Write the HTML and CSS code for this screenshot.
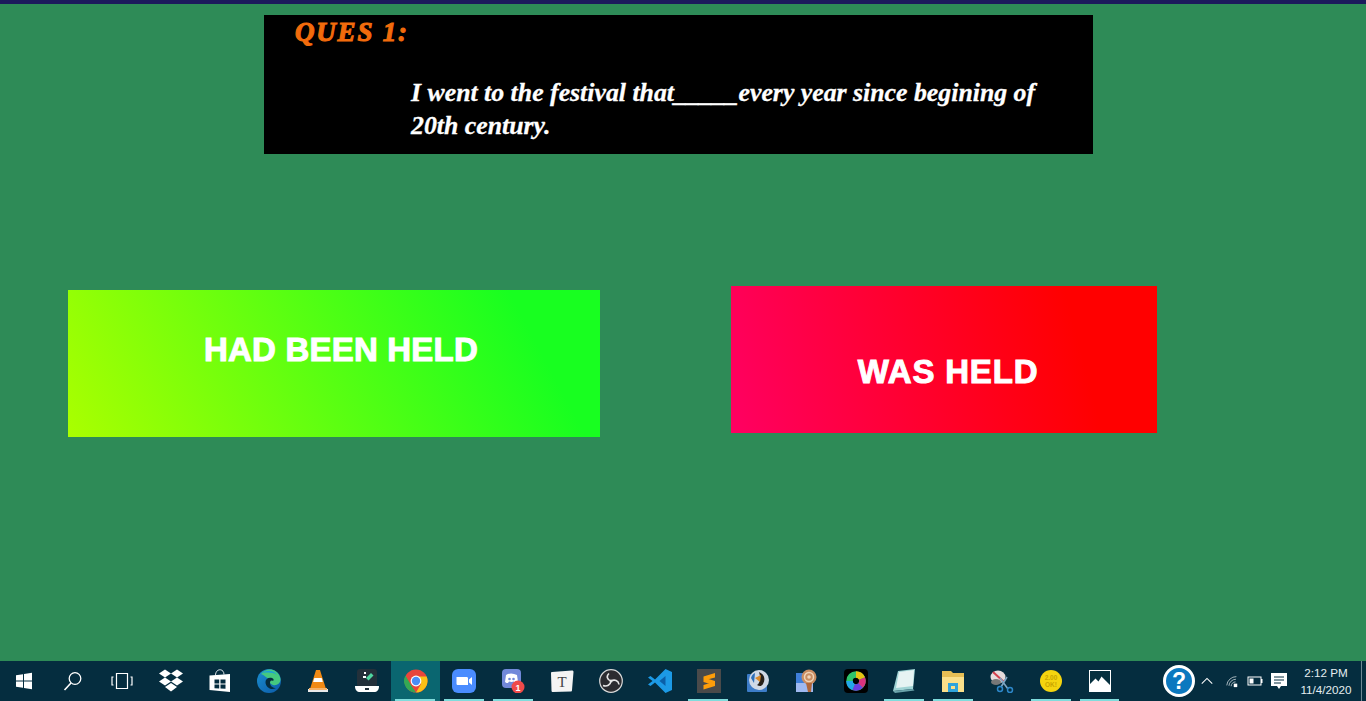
FILE: index.html
```html
<!DOCTYPE html>
<html lang="en">
<head>
<meta charset="utf-8">
<title>Quiz</title>
<link rel="stylesheet" href="styles.css">
</head>
<body>
<div class="topbar"></div>
<main class="quiz">
  <section class="question">
    <h1 class="ques-title">QUES 1:</h1>
    <p class="ques-text">I went to the festival that_____every year since begining of 20th century.</p>
  </section>
  <section class="options">
    <div class="option option-green"><span class="option-label label-green">HAD BEEN HELD</span></div>
    <div class="option option-red"><span class="option-label label-red">WAS HELD</span></div>
  </section>
</main>
<footer class="taskbar">
  <div class="apps">
    <div class="app"><svg class="ic" viewBox="0 0 24 24"><path fill="#fff" d="M4 6.200l7-1v6.300H4zM12 5l8-1.200v7.700h-8zM4 12.500h7v6.300l-7-1zM12 12.500h8v7.700l-8-1.200z"/></svg></div>
    <div class="app"><svg class="ic" viewBox="0 0 24 24"><circle cx="14" cy="9.500" r="5.800" fill="none" stroke="#fff" stroke-width="1.300"/><path d="M10 14l-6.500 7" stroke="#fff" stroke-width="1.600" fill="none"/></svg></div>
    <div class="app"><svg class="ic" viewBox="0 0 24 24"><path fill="none" stroke="#fff" stroke-width="1.200" d="M6.500 4.500h11v15h-11zM3.500 8H2v8h1.500M20.500 8H22v8h-1.500"/></svg></div>
    <div class="app"><svg class="ic" viewBox="0 0 24 24"><path fill="#fff" d="M6 .5L12 4.500 6 8.500 0 4.500zM18 .5L24 4.500l-6 4-6-4zM6 8.500L12 12.500 6 16.500 0 12.500zM18 8.500L24 12.500l-6 4-6-4zM12 14l6 4-6 4.500-6-4.500z"/></svg></div>
    <div class="app"><svg class="ic" viewBox="0 0 24 24"><path fill="none" stroke="#dfe8ec" stroke-width="1" d="M7.500 6.500C7.500 -1 16 -1 16 5.500"/><path fill="#fff" d="M1.500 6.500L22 5v18l-20.500-2z"/><path fill="#052d3f" d="M6.500 10.500h4.700v4H6.500zM12.500 10.500h5v4h-5zM6.500 15.500h4.700v4l-4.700-.3zM12.500 15.500h5v4.200l-5-.3z"/></svg></div>
    <div class="app"><svg class="ic" viewBox="0 0 24 24"><defs><linearGradient id="edge" x1="0" y1="0" x2="1" y2="1"><stop offset="0" stop-color="#1a8fd0"/><stop offset="1" stop-color="#0c5aa8"/></linearGradient></defs><circle cx="12" cy="12" r="12" fill="url(#edge)"/><path fill="#45c97f" d="M4 5c5-7 16-6 19 3 2 6-3 9-7 8-3-1-4-3-3-5-3-2-6-5-9-6z"/><path fill="#1aa0d8" d="M4 5c4-4 12-5 16 1-4-3-12-3-16-1z"/><path fill="#052d3f" d="M8.500 13c0-3 3-5 6.500-4 2 1 2 2 1 3-2-1-3 0-3 2 0 3 3 5 6 5-5 3-10.500-1-10.500-6z"/></svg></div>
    <div class="app"><svg class="ic" viewBox="0 0 24 24"><path fill="#f28a14" d="M10 1h4l6 19H4z"/><path fill="#fff" d="M8.300 9h7.400l1.100 4H7.100z"/><path fill="#e9e9e9" d="M2 20h20v3H2z"/><path fill="#f7b267" d="M3 19h18v2H3z"/></svg></div>
    <div class="app"><svg class="ic" viewBox="0 0 24 24"><rect x="2" y="0" width="20" height="18" rx="3" fill="#23303a"/><path fill="#4fd6a0" d="M11 9l5-5 2.500 2.500-5 5z"/><path fill="#fff" d="M9 3h2v2H9zM8 7h3v2H8z"/><path fill="#fff" d="M0 17h24c0 4-2 6-5 6H5c-3 0-5-2-5-6z"/><rect x="10" y="19" width="4" height="2" fill="#23303a"/></svg></div>
    <div class="app app-active run"><svg class="ic" viewBox="0 0 24 24"><circle cx="12" cy="12" r="11.500" fill="#e8453c"/><path fill="#34a853" d="M1.500 6.500L7 16l5 7.500A11.500 11.500 0 0 1 1.500 6.500z"/><path fill="#fbc116" d="M12 7.500h10.600A11.500 11.500 0 0 1 12 23.500L17 15z"/><circle cx="12" cy="12" r="5.400" fill="#fff"/><circle cx="12" cy="12" r="4.200" fill="#4a8df6"/></svg></div>
    <div class="app run"><svg class="ic" viewBox="0 0 24 24"><rect x="0" y="0" width="24" height="24" rx="6" fill="#4a8cff"/><path fill="#fff" d="M4.500 8h10c1 0 1.500.5 1.500 1.500V16H6c-1 0-1.500-.5-1.500-1.500zM17 10.500l3-2.500v8l-3-2.500z"/></svg></div>
    <div class="app run"><svg class="ic" viewBox="0 0 24 24"><rect x="1" y="0" width="19" height="19" rx="4" fill="#7289da"/><path fill="#fff" d="M5 6c3-2 7-2 11 0l1 7c-1 1-2 1-3 1l-1-1.500c-2 .5-3 .5-5 0L7 14c-1 0-2 0-3-1z"/><circle cx="8.500" cy="10" r="1.300" fill="#7289da"/><circle cx="12.500" cy="10" r="1.300" fill="#7289da"/><circle cx="17" cy="18" r="6.500" fill="#ef4a4a"/><text x="17" y="21.800" class="badge">1</text></svg></div>
    <div class="app"><svg class="ic" viewBox="0 0 24 24"><path fill="#f4f4f4" d="M2 3l20-1.500c1 0 1.500 .5 1.500 1.500L22 21c0 1-.5 1.500-1.500 1.500L3 23c-1 0-1.500-.5-1.500-1.500L1 4c0-.5.500-1 1-1z"/><text x="12" y="18" class="tile-t">T</text></svg></div>
    <div class="app"><svg class="ic" viewBox="0 0 24 24"><circle cx="12" cy="12" r="11.300" fill="#2c2c30" stroke="#d8d8d8" stroke-width="1.200"/><path fill="none" stroke="#e6e6e6" stroke-width="1.600" d="M12 12C8 11 7 7 10 4.500M12 12c3.500-2 7.500-.5 8 3.500M12 12c-.5 4-4 6-8 4.500"/><circle cx="12" cy="12" r="1.500" fill="#e6e6e6"/></svg></div>
    <div class="app"><svg class="ic" viewBox="0 0 24 24"><path fill="#1c9ae6" d="M17.500 0L24 3v18l-6.500 3L7 13.500 2.500 17 0 15.500 4.500 12 0 8.500 2.500 7 7 10.500z"/><path fill="#0a5fa8" d="M17.500 7l-6 5 6 5z"/></svg></div>
    <div class="app run"><svg class="ic" viewBox="0 0 24 24"><rect width="24" height="24" fill="#4a4a4a"/><path fill="#ff9d0a" d="M18 4v4.500L6.500 11.500V7.500zM6.500 8.500L18 12v4.500L6.500 13zM18 12.500V17L6.500 20.500V16z"/></svg></div>
    <div class="app"><svg class="ic" viewBox="0 0 24 24"><rect x="1" y="5" width="20" height="18" rx="1" fill="#3c7cc8"/><circle cx="13" cy="11" r="10" fill="#cfd9e6"/><path fill="#26201a" d="M13 3c5 2 7 7 4 12-2 3-4 2-6 1 3-2 4-7 2-13z"/><path fill="#d98a2c" d="M9 9l6-3-1 7z"/><path fill="#2d6fb8" d="M5 9c1-3 2-4 4-5l-1 10z"/></svg></div>
    <div class="app"><svg class="ic" viewBox="0 0 24 24"><rect x="1" y="4" width="17" height="19" fill="#3f7fd9"/><rect x="1" y="14" width="17" height="9" fill="#9fb9f0"/><circle cx="14" cy="8" r="7.500" fill="#c98d62"/><circle cx="14" cy="8" r="4.500" fill="none" stroke="#f0d5b8" stroke-width="1.500"/><circle cx="14" cy="8" r="1.800" fill="#f0d5b8"/><path fill="#b0673a" d="M11 14h6l-1 9h-3z"/></svg></div>
    <div class="app"><svg class="ic" viewBox="0 0 24 24"><rect width="24" height="24" rx="4" fill="#000"/><g fill="none" stroke-width="6.500"><circle cx="12" cy="12" r="6.500" stroke="#2ec46a"/><path stroke="#e6c312" d="M12 5.500a6.500 6.500 0 0 1 6 4"/><path stroke="#d8327d" d="M18 9.500a6.500 6.500 0 0 1-1.500 7"/><path stroke="#6a3ee0" d="M16.500 16.500a6.500 6.500 0 0 1-7 1.500"/><path stroke="#22a6e8" d="M9.500 18a6.500 6.500 0 0 1-4-6"/></g></svg></div>
    <div class="app run"><svg class="ic" viewBox="0 0 24 24"><path fill="#9fd3d4" d="M6 2L23 0 21 20 1 22z"/><path fill="#e6f3f3" d="M7 3l15-2-1 16-17 2z"/><path fill="#6aa3ab" d="M1 22l20-2 1.500 1.500L3 24z"/></svg></div>
    <div class="app run"><svg class="ic" viewBox="0 0 24 24"><path fill="#e7bf55" d="M1 2h9l2 2h11v19H1z"/><path fill="#fbe08a" d="M1 8h22v15H1z"/><rect x="7" y="14" width="10" height="9" fill="#2fa4dc"/><rect x="10" y="17" width="4" height="3" fill="#fbe08a"/></svg></div>
    <div class="app"><svg class="ic" viewBox="0 0 24 24"><ellipse cx="8" cy="8" rx="7.500" ry="6.500" fill="#e5dcdc"/><path stroke="#d23f4c" stroke-width="2" fill="none" d="M3 3l11 10"/><ellipse cx="6" cy="13" rx="5" ry="3" fill="#777"/><path stroke="#7fa6c4" stroke-width="1.600" fill="none" d="M10 9l8 11M17 8L11 18"/><circle cx="20" cy="21" r="2.500" fill="none" stroke="#2d87c9" stroke-width="1.500"/><circle cx="10" cy="20" r="2.500" fill="none" stroke="#2d87c9" stroke-width="1.500"/></svg></div>
    <div class="app run"><svg class="ic" viewBox="0 0 24 24"><circle cx="12" cy="12" r="11" fill="#f4d40f"/><text x="12" y="11" class="ok">2.00</text><text x="12" y="18" class="ok">OK!</text></svg></div>
    <div class="app run"><svg class="ic" viewBox="0 0 24 24"><rect x="1.500" y="1.500" width="21" height="21" fill="#06303f" stroke="#fff" stroke-width="1"/><path fill="#fff" d="M1.500 22.500v-7L7.500 9.500l3 3 3-5 9 9v6z"/></svg></div>
  </div>
  <div class="tray">
    <svg class="help" viewBox="0 0 32 32"><circle cx="16" cy="16" r="14.500" fill="#0b78bf" stroke="#fff" stroke-width="3"/><text x="16" y="24" class="help-q">?</text></svg>
    <svg class="tray-ic" viewBox="0 0 16 16"><path d="M2 11l6-6 6 6" fill="none" stroke="#fff" stroke-width="1.200"/></svg>
    <svg class="tray-ic wifi" viewBox="0 0 16 16"><path d="M2 13a11 11 0 0 1 11-10M4.500 13.500a8 8 0 0 1 8-7.500M7 14a5 5 0 0 1 5-5" fill="none" stroke="#b9c6cc" stroke-width="1"/><path d="M10 11h4v4h-4z" fill="#fff"/></svg>
    <svg class="tray-ic batt" viewBox="0 0 16 16"><rect x="1" y="4" width="13" height="8" fill="none" stroke="#fff" stroke-width="1"/><rect x="2.500" y="5.500" width="4" height="5" fill="#fff"/><rect x="14" y="6" width="1.500" height="4" fill="#fff"/></svg>
    <svg class="tray-ic note" viewBox="0 0 16 16"><path fill="#fff" d="M0 0h16v13h-6l-2 3-2-3H0z"/><path d="M3 4h10M3 7h10M3 10h7" stroke="#052d3f" stroke-width="1"/></svg>
    <div class="clock"><span>2:12 PM</span><span>11/4/2020</span></div>
    <div class="desk-edge"></div>
  </div>
</footer>
</body>
</html>
```

FILE: styles.css
```css
* { box-sizing: border-box; }
html, body { margin: 0; height: 100%; }
body {
  height: 701px;
  overflow: hidden;
  display: flex;
  flex-direction: column;
  background: #2e8b57;
  font-family: "Liberation Sans", Arial, sans-serif;
}
.topbar { height: 4px; background: #1c1a5c; flex: none; }
.quiz { flex: 1; min-height: 0; padding-top: 11px; }
.question {
  margin-left: 264px;
  width: 829px;
  height: 139px;
  background: #000;
  padding: 0 50px 0 147px;
}
.ques-title {
  margin: 0 0 0 -116px;
  padding-top: 2px;
  height: 61px;
  font: italic 700 27px/30px "Liberation Serif", serif;
  letter-spacing: 1.800px;
  color: #f26b0c;
  -webkit-text-stroke: 1.100px #f26b0c;
}
.ques-text {
  margin: 0;
  font: italic 700 25.800px/33px "Liberation Serif", serif;
  color: #fff;
  -webkit-text-stroke: 0.300px #fff;
}
.options {
  display: flex;
  align-items: flex-start;
  margin-top: 133px;
  padding-left: 68px;
  gap: 131px;
}
.option { display: flex; justify-content: center; }
.option-green {
  width: 532px;
  height: 147px;
  margin-top: 3px;
  padding: 42px 0 0 14px;
  background: linear-gradient(62deg, #aaff00, #18ff20 85%);
}
.option-red {
  width: 426px;
  height: 147px;
  margin-top: -1px;
  padding: 68px 0 0 8px;
  background: linear-gradient(75deg, #ff0062, #ff0000 80%);
}
.option-label {
  color: #fff;
  font-family: "Liberation Sans", sans-serif;
  font-weight: 700;
  line-height: 36px;
  white-space: nowrap;
  -webkit-text-stroke: 1px #fff;
}
.label-green { font-size: 33px; letter-spacing: 0.200px; }
.label-red { font-size: 33px; letter-spacing: 0.800px; }
.taskbar {
  flex: none;
  height: 40px;
  background: #052d3f;
  display: flex;
  justify-content: space-between;
}
.apps { display: flex; }
.app {
  width: 48.900px;
  height: 40px;
  display: flex;
  align-items: center;
  justify-content: center;
  position: relative;
}
.app-active { background: #0a6670; }
.run::after {
  content: "";
  position: absolute;
  left: 4px;
  right: 5px;
  bottom: 0;
  height: 2px;
  background: #7fdcdc;
}
.ic { width: 24px; height: 24px; display: block; }
.badge { font: 700 9px "Liberation Sans", sans-serif; fill: #fff; text-anchor: middle; }
.tile-t { font: 15px "Liberation Serif", serif; fill: #444; text-anchor: middle; }
.ok { font: 700 6.500px "Liberation Sans", sans-serif; fill: #c9a500; text-anchor: middle; }
.help-q { font: 700 23px "Liberation Sans", sans-serif; fill: #fff; text-anchor: middle; }
.tray { display: flex; align-items: center; }
.help { width: 32px; height: 32px; margin-right: 5px; }
.tray-ic { width: 14px; height: 14px; margin-right: 11px; }
.batt { width: 16px; height: 16px; margin-right: 8px; margin-left: -3px; }
.note { width: 16px; height: 16px; margin-right: 0; }
.clock {
  width: 66px;
  margin: 0 2px 0 6px;
  display: flex;
  flex-direction: column;
  align-items: center;
  color: #e4edf0;
  font-size: 11.700px;
  line-height: 17px;
}
.desk-edge { width: 5px; height: 40px; border-left: 1px solid #6d8894; }
```
